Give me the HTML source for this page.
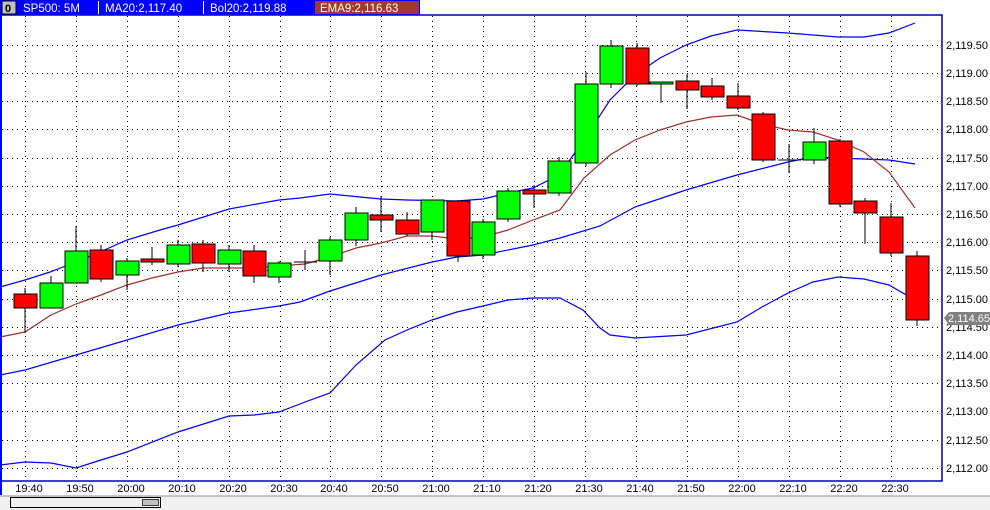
<!DOCTYPE html>
<html><head><meta charset="utf-8"><style>
html,body{margin:0;padding:0;width:990px;height:510px;overflow:hidden;background:#fff;font-family:"Liberation Sans",sans-serif}
svg{display:block}
</style></head><body>
<svg width="990" height="510" viewBox="0 0 990 510" xmlns="http://www.w3.org/2000/svg" font-family="Liberation Sans, sans-serif">
<rect x="0" y="0" width="990" height="510" fill="#fff"/>
<!-- grid -->
<g stroke="#000" stroke-width="1" stroke-dasharray="1,4" shape-rendering="crispEdges">
<line x1="2" y1="45.5" x2="942" y2="45.5"/><line x1="2" y1="73.5" x2="942" y2="73.5"/><line x1="2" y1="101.5" x2="942" y2="101.5"/><line x1="2" y1="129.5" x2="942" y2="129.5"/><line x1="2" y1="158.5" x2="942" y2="158.5"/><line x1="2" y1="186.5" x2="942" y2="186.5"/><line x1="2" y1="214.5" x2="942" y2="214.5"/><line x1="2" y1="242.5" x2="942" y2="242.5"/><line x1="2" y1="270.5" x2="942" y2="270.5"/><line x1="2" y1="299.5" x2="942" y2="299.5"/><line x1="2" y1="327.5" x2="942" y2="327.5"/><line x1="2" y1="355.5" x2="942" y2="355.5"/><line x1="2" y1="383.5" x2="942" y2="383.5"/><line x1="2" y1="411.5" x2="942" y2="411.5"/><line x1="2" y1="440.5" x2="942" y2="440.5"/><line x1="2" y1="468.5" x2="942" y2="468.5"/>
<line x1="25.5" y1="16" x2="25.5" y2="480"/><line x1="76.5" y1="16" x2="76.5" y2="480"/><line x1="127.5" y1="16" x2="127.5" y2="480"/><line x1="178.5" y1="16" x2="178.5" y2="480"/><line x1="229.5" y1="16" x2="229.5" y2="480"/><line x1="280.5" y1="16" x2="280.5" y2="480"/><line x1="330.5" y1="16" x2="330.5" y2="480"/><line x1="381.5" y1="16" x2="381.5" y2="480"/><line x1="432.5" y1="16" x2="432.5" y2="480"/><line x1="483.5" y1="16" x2="483.5" y2="480"/><line x1="534.5" y1="16" x2="534.5" y2="480"/><line x1="585.5" y1="16" x2="585.5" y2="480"/><line x1="636.5" y1="16" x2="636.5" y2="480"/><line x1="687.5" y1="16" x2="687.5" y2="480"/><line x1="738.5" y1="16" x2="738.5" y2="480"/><line x1="789.5" y1="16" x2="789.5" y2="480"/><line x1="840.5" y1="16" x2="840.5" y2="480"/><line x1="891.5" y1="16" x2="891.5" y2="480"/>
</g>
<!-- bands -->
<g fill="none" stroke="#0000ff" stroke-width="1.2">
<polyline points="0,287 25,280 50,272 76,262 100,252 127,240 160,230 178,225 229,209 279,200 300,198 330,194 360,197 381,199 407,200 457,201 483,199 508,193 533,188 559,175 584,140 610,100 635,75 660,58 686,45 711,36 737,30 788,33 838,37 864,37 889,33 915,23"/>
<polyline points="0,375 25,370 76,355 127,340 178,325 229,313 279,306 300,302 330,291 381,275 432,262 457,257 483,255 533,245 560,238 600,226 635,207 686,190 737,175 788,162 813,157 838,158 889,160 915,164"/>
<polyline points="0,465 25,462 51,463 76,468 101,460 127,452 178,432 229,416 254,415 279,412 305,402 330,393 356,365 385,340 407,330 432,320 457,312 483,306 508,300 533,298 560,298 583,310 600,328 610,335 635,338 686,335 737,322 762,307 788,293 813,282 838,277 864,279 889,285 915,300"/>
</g>
<polyline fill="none" stroke="#a03030" stroke-width="1.2" points="0,337 25,332 51,315 76,304 101,295 127,285 152,278 178,272 203,268 229,268 254,268 279,266 305,264 330,257 356,248 381,243 407,236 432,236 457,239 483,237 508,230 533,220 560,210 584,178 610,155 635,140 660,130 686,122 711,117 737,115 762,124 788,130 813,132 838,140 864,152 889,172 915,208"/>
<!-- candles -->
<g stroke="#000" stroke-width="1.3" shape-rendering="crispEdges">
<line x1="25" y1="288" x2="25" y2="333"/><rect x="14" y="294" width="23" height="14" fill="#ff0000"/>
<line x1="51" y1="276" x2="51" y2="308"/><rect x="40" y="283" width="23" height="25" fill="#00ff00"/>
<line x1="76" y1="226" x2="76" y2="283"/><rect x="65" y="251" width="23" height="32" fill="#00ff00"/>
<line x1="101" y1="245" x2="101" y2="282"/><rect x="90" y="250" width="23" height="29" fill="#ff0000"/>
<line x1="127" y1="258" x2="127" y2="290"/><rect x="116" y="261" width="23" height="14" fill="#00ff00"/>
<line x1="152" y1="247" x2="152" y2="265"/><rect x="141" y="259" width="23" height="3" fill="#ff0000"/>
<line x1="178" y1="240" x2="178" y2="267"/><rect x="167" y="245" width="23" height="19" fill="#00ff00"/>
<line x1="203" y1="240" x2="203" y2="272"/><rect x="192" y="244" width="23" height="19" fill="#ff0000"/>
<line x1="229" y1="245" x2="229" y2="272"/><rect x="218" y="250" width="23" height="14" fill="#00ff00"/>
<line x1="254" y1="245" x2="254" y2="283"/><rect x="243" y="251" width="23" height="25" fill="#ff0000"/>
<line x1="279" y1="261" x2="279" y2="283"/><rect x="268" y="263" width="23" height="14" fill="#00ff00"/>
<line x1="305" y1="250" x2="305" y2="270"/><line x1="294" y1="262" x2="317" y2="262"/>
<line x1="330" y1="237" x2="330" y2="275"/><rect x="319" y="240" width="23" height="21" fill="#00ff00"/>
<line x1="356" y1="207" x2="356" y2="246"/><rect x="345" y="213" width="23" height="27" fill="#00ff00"/>
<line x1="381" y1="196" x2="381" y2="232"/><rect x="370" y="215" width="23" height="5" fill="#ff0000"/>
<line x1="407" y1="212" x2="407" y2="236"/><rect x="396" y="220" width="23" height="14" fill="#ff0000"/>
<line x1="432" y1="200" x2="432" y2="240"/><rect x="421" y="200" width="23" height="32" fill="#00ff00"/>
<line x1="458" y1="200" x2="458" y2="262"/><rect x="447" y="201" width="23" height="55" fill="#ff0000"/>
<line x1="483" y1="219" x2="483" y2="259"/><rect x="472" y="222" width="23" height="33" fill="#00ff00"/>
<line x1="508" y1="188" x2="508" y2="222"/><rect x="497" y="191" width="23" height="28" fill="#00ff00"/>
<line x1="534" y1="185" x2="534" y2="208"/><rect x="523" y="190" width="23" height="4" fill="#ff0000"/>
<line x1="559" y1="157" x2="559" y2="196"/><rect x="548" y="161" width="23" height="32" fill="#00ff00"/>
<line x1="586" y1="72" x2="586" y2="166"/><rect x="575" y="84" width="23" height="79" fill="#00ff00"/>
<line x1="611" y1="40" x2="611" y2="88"/><rect x="600" y="46" width="23" height="38" fill="#00ff00"/>
<line x1="637" y1="43" x2="637" y2="86"/><rect x="626" y="48" width="23" height="36" fill="#ff0000"/>
<line x1="661" y1="82" x2="661" y2="103"/><rect x="650" y="82" width="23" height="2" fill="#00ff00"/>
<line x1="687" y1="74" x2="687" y2="109"/><rect x="676" y="81" width="23" height="9" fill="#ff0000"/>
<line x1="712" y1="78" x2="712" y2="100"/><rect x="701" y="86" width="23" height="11" fill="#ff0000"/>
<line x1="738" y1="83" x2="738" y2="110"/><rect x="727" y="96" width="23" height="12" fill="#ff0000"/>
<line x1="763" y1="112" x2="763" y2="162"/><rect x="752" y="114" width="23" height="46" fill="#ff0000"/>
<line x1="789" y1="144" x2="789" y2="173"/><line x1="778" y1="160" x2="801" y2="160"/>
<line x1="814" y1="128" x2="814" y2="164"/><rect x="803" y="142" width="23" height="18" fill="#00ff00"/>
<line x1="840" y1="139" x2="840" y2="207"/><rect x="829" y="141" width="23" height="63" fill="#ff0000"/>
<line x1="865" y1="198" x2="865" y2="244"/><rect x="854" y="201" width="23" height="12" fill="#ff0000"/>
<line x1="891" y1="203" x2="891" y2="256"/><rect x="880" y="217" width="23" height="36" fill="#ff0000"/>
<line x1="917" y1="251" x2="917" y2="326"/><rect x="906" y="256" width="23" height="64" fill="#ff0000"/>
</g>
<!-- frame -->
<rect x="1" y="15" width="941" height="466" fill="none" stroke="#0000c0" stroke-width="1.5"/>
<line x1="1" y1="0" x2="1" y2="495" stroke="#0000ff" stroke-width="2"/>
<!-- header -->
<rect x="0" y="0" width="420" height="15" fill="#0000ff"/>
<rect x="2" y="1" width="14" height="13" fill="#c0c0c0" stroke="#000" stroke-width="1"/>
<text x="5" y="12" font-size="11" font-weight="bold">0</text>
<g fill="#fff" font-size="11.5">
<text x="23" y="12">SP500: 5M</text>
<line x1="98.5" y1="1" x2="98.5" y2="14" stroke="#fff"/>
<text x="105" y="12">MA20:2,117.40</text>
<line x1="203.5" y1="1" x2="203.5" y2="14" stroke="#fff"/>
<text x="210" y="12">Bol20:2,119.88</text>
</g>
<rect x="315" y="1" width="104" height="13" fill="#a03838"/>
<text x="320" y="12" fill="#fff" font-size="11.5">EMA9:2,116.63</text>
<!-- right axis -->
<g font-size="11" fill="#000">
<text x="946" y="49">2,119.50</text><text x="946" y="77">2,119.00</text><text x="946" y="105">2,118.50</text><text x="946" y="133">2,118.00</text><text x="946" y="162">2,117.50</text><text x="946" y="190">2,117.00</text><text x="946" y="218">2,116.50</text><text x="946" y="246">2,116.00</text><text x="946" y="274">2,115.50</text><text x="946" y="303">2,115.00</text><text x="946" y="331">2,114.50</text><text x="946" y="359">2,114.00</text><text x="946" y="387">2,113.50</text><text x="946" y="415">2,113.00</text><text x="946" y="444">2,112.50</text><text x="946" y="472">2,112.00</text>
</g>
<polygon points="944,318 949,312 990,312 990,325 949,325" fill="#808080"/>
<text x="948" y="322" font-size="11" fill="#fff">2,114.65</text>
<!-- time axis -->
<g font-size="11" fill="#000" text-anchor="middle">
<text x="29" y="492">19:40</text><text x="80" y="492">19:50</text><text x="131" y="492">20:00</text><text x="182" y="492">20:10</text><text x="233" y="492">20:20</text><text x="284" y="492">20:30</text><text x="334" y="492">20:40</text><text x="385" y="492">20:50</text><text x="436" y="492">21:00</text><text x="487" y="492">21:10</text><text x="538" y="492">21:20</text><text x="589" y="492">21:30</text><text x="640" y="492">21:40</text><text x="691" y="492">21:50</text><text x="742" y="492">22:00</text><text x="793" y="492">22:10</text><text x="844" y="492">22:20</text><text x="895" y="492">22:30</text>
</g>
<!-- bottom bar -->
<rect x="0" y="496" width="990" height="14" fill="#f0f0f0"/>
<line x1="0" y1="496" x2="990" y2="496" stroke="#8090a0" stroke-width="1"/>
<rect x="10.5" y="497.5" width="150" height="10" fill="#f0f0f0" stroke="#000" stroke-width="1"/>
<rect x="142.5" y="499.5" width="16" height="6" fill="#c0c0c0" stroke="#000" stroke-width="0.7"/>
</svg>
</body></html>
